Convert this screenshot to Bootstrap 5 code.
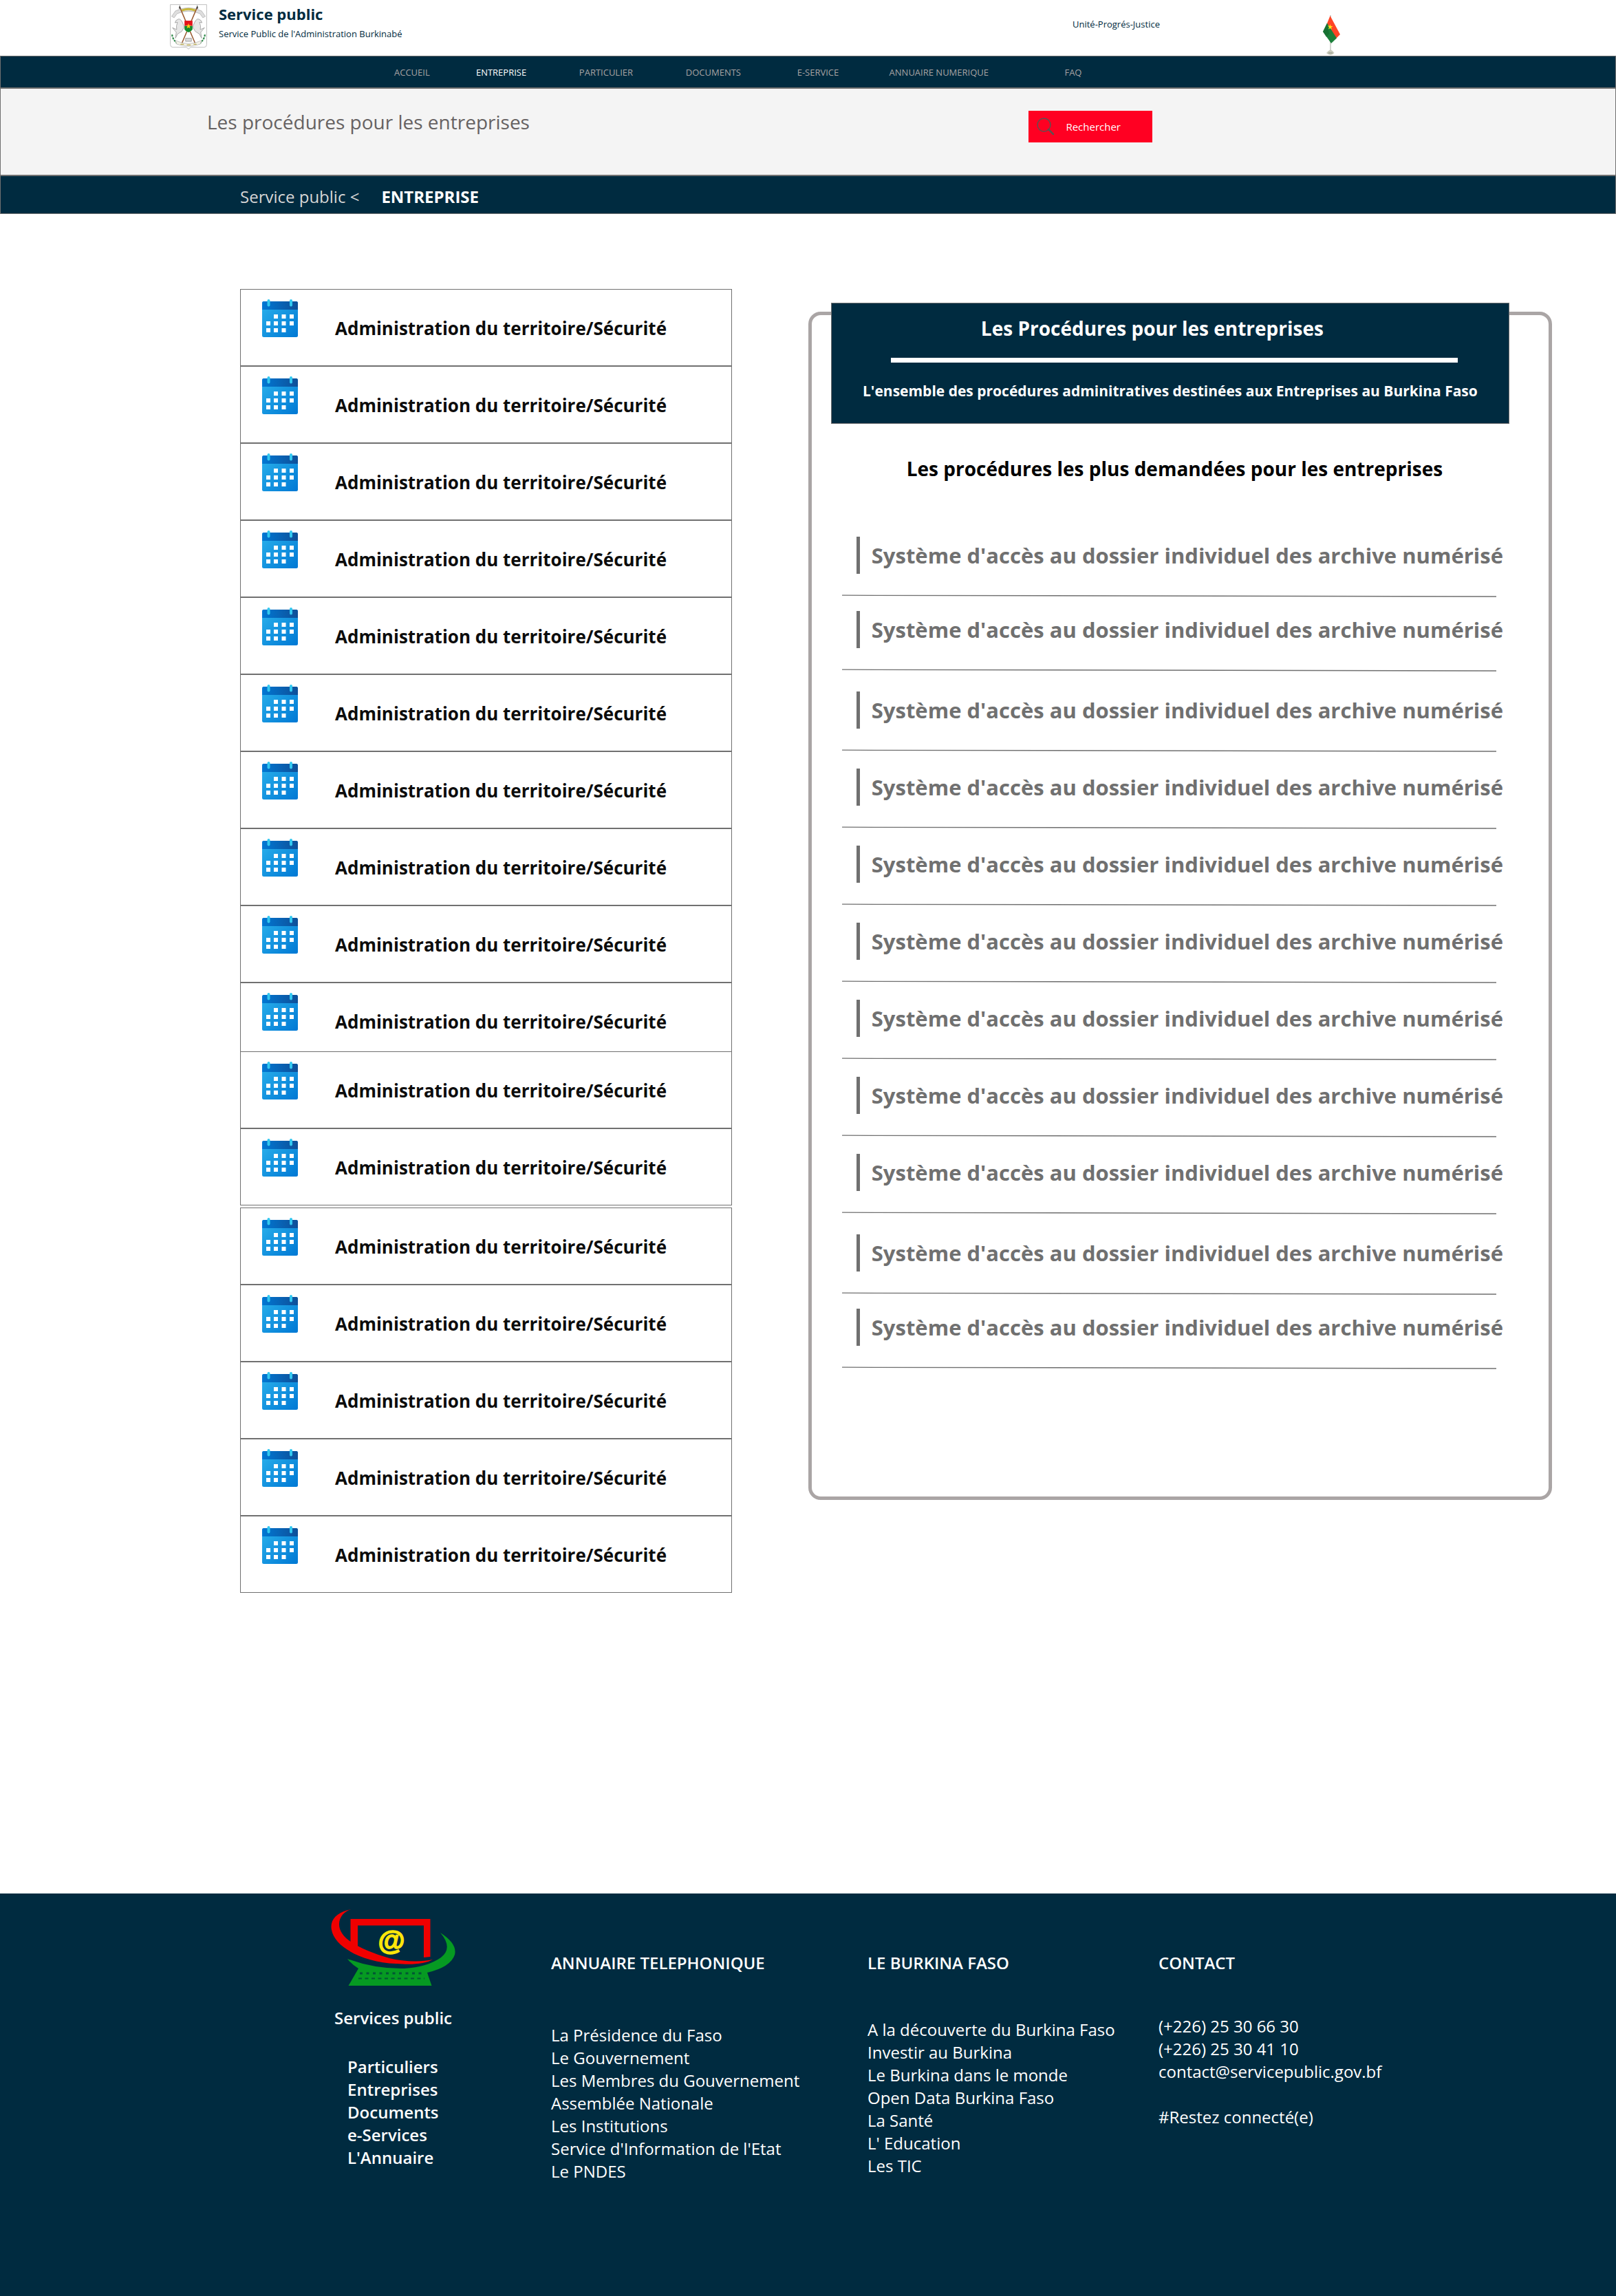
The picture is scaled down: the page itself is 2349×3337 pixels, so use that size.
<!DOCTYPE html>
<html lang="fr">
<head>
<meta charset="utf-8">
<meta name="viewport" content="width=device-width, initial-scale=1">
<title>Service public - Les procédures pour les entreprises</title>
<link href="https://cdn.jsdelivr.net/npm/bootstrap@5.3.0/dist/css/bootstrap.min.css" rel="stylesheet">
<style>
  :root { --navy: #002b40; --line: #707070; }
  body { font-family: "Open Sans", "Noto Sans", sans-serif; color: #000; background: #fff; }
  a { color: inherit; text-decoration: none; }
  a:hover { text-decoration: underline; }

  .top-band { display: grid; grid-template-columns: 1312fr 364fr 426fr; height: 81px; padding-left: 247px; color: var(--navy); font-size: 13px; line-height: 20px; }
  .brand-emblem { width: 54px; height: 66px; margin: 6px 17px 0 0; }
  .brand-title { font-size: 22px; line-height: 30px; margin: 5px 0 4px; }
  .motto { padding-top: 25px; }
  .flag-icon { width: 25px; height: 58px; margin-top: 22px; }

  .main-menu { display: grid; grid-template-columns: 119fr 150fr 155fr 162fr 134fr 255fr 801fr; align-items: center; height: 47px; padding: 0 0 0 572px; margin: 0; background: var(--navy); border: 1px solid var(--line); color: #a8a3a3; font-size: 13px; line-height: 20px; list-style: none; white-space: nowrap; }
  .main-menu .current { color: #fff; }

  .hero-band { display: grid; grid-template-columns: 1195fr 853fr; min-height: 127px; padding-left: 300px; background: #f4f4f4; border: 1px solid var(--line); }
  .hero-title { font-size: 28px; line-height: 40px; font-weight: 400; color: #666262; margin: 28px 0 0; }
  .btn-search { width: 180px; height: 46px; margin-top: 32px; padding: 0 0 0 12px; border: 0; border-radius: 0; background: #ff0022; color: #fff; font-size: 15px; gap: 16px; }
  .btn-search:hover { background: #d9001d; color: #fff; }

  .crumb-band { min-height: 56px; padding: 10px 0 4px 348px; background: var(--navy); border: 1px solid var(--line); color: #d6d6d6; font-size: 24px; line-height: 40px; gap: 32px; }

  .content-area { display: grid; grid-template-columns: 715fr 1081fr; column-gap: 111px; align-items: start; padding: 109px 93px 437px 349px; }

  .theme-item { height: 112px; padding-left: 31px; border: 1px solid var(--line); color: #0c0c0c; }
  .theme-item.joined { height: 100px; border-bottom: 0; }
  .theme-item.apart { margin-top: 3px; }
  .theme-item svg { width: 52px; height: 55px; margin: 14px 54px 0 0; }
  .theme-item a { font-size: 26px; line-height: 40px; font-weight: 700; margin-top: 36px; white-space: nowrap; }

  .proc-panel { margin-top: 33px; padding-bottom: 185px; border: 5px solid #aaa5a5; border-radius: 18px; }
  .proc-head { margin: -18px 57px 0 28px; padding: 16px 0 31px; background: var(--navy); border: 1px solid var(--line); color: #fff; text-align: center; }
  .proc-head h2 { font-size: 28px; line-height: 40px; font-weight: 700; margin: 0 52px 0 0; }
  .proc-head hr { height: 7px; margin: 23px 74px 25px 86px; border: 0; background: #fff; opacity: 1; }
  .proc-head p { font-size: 21px; line-height: 32px; font-weight: 700; margin: 0; white-space: nowrap; }
  .proc-sub { font-size: 28px; line-height: 40px; font-weight: 700; text-align: center; margin: 45px 16px 79px 0; }
  .proc-list { margin: 0 66px 0 44px; padding: 0; list-style: none; color: var(--line); }
  .proc-list li + li { margin-top: 24px; }
  .proc-list li.near { margin-top: 20px; }
  .proc-list li.far { margin-top: 29px; }
  .proc-list a { display: flex; align-items: center; height: 54px; margin: 0 0 30px 21px; padding-left: 17px; border-left: 5px solid var(--line); font-size: 31px; font-weight: 700; white-space: nowrap; }
  .proc-list svg { display: block; width: calc(100% - 10px); height: 4px; }

  .site-footer { display: grid; grid-template-columns: 320fr 460fr 423fr 665fr; min-height: 585px; padding-left: 481px; background: var(--navy); color: #fff; font-size: 24px; line-height: 33px; white-space: nowrap; }
  .site-footer h3 { font-size: 24px; line-height: 33px; font-weight: 600; margin: 84px 0 0; }
  .site-footer ul { list-style: none; padding: 0; margin: 72px 0 0; }
  .site-footer .gap-country { margin-top: 64px; }
  .site-footer .gap-contact { margin-top: 59px; }
  .foot-logo { display: block; width: 181px; height: 112px; margin-top: 23px; }
  .site-footer .foot-brand { margin: 29px 0 0 5px; }
  .site-footer .foot-menu { margin: 38px 0 0 24px; font-weight: 600; }
</style>
</head>
<body>

<svg width="0" height="0" class="d-none" aria-hidden="true">
  <symbol id="slant" viewBox="0 0 100 4" preserveAspectRatio="none"><path d="M0 1.2L100 3" stroke="#707070" stroke-width="1.3" fill="none"/></symbol>
</svg>

<header>
  <div class="top-band">
    <div class="d-flex">
      <svg class="brand-emblem" viewBox="0 0 176 200" preserveAspectRatio="none" role="img" aria-label="Armoiries du Burkina Faso">
        <path d="M2 2H174V178Q174 190 162 190H98L88 198L78 190H14Q2 190 2 178Z" fill="#fff" stroke="#bcbcbc" stroke-width="3"/>
        <path d="M8 54L26 30Q88 2 150 30L168 54L156 60L142 42Q88 20 34 42L20 60Z" fill="#dedede" stroke="#a5a5a5" stroke-width="2"/>
        <path d="M56 28Q88 16 120 28" fill="none" stroke="#c9b93c" stroke-width="9"/>
        <path d="M46 12L122 178M130 12L54 178" stroke="#9a5b32" stroke-width="5"/>
        <path d="M46 4L42 20L52 20ZM130 4L124 20L134 20Z" fill="#444"/>
        <path d="M66 96Q54 62 40 66Q26 70 24 82L36 80Q28 96 32 112L12 104L30 124L26 150L36 132L56 120L66 104Z" fill="#e6e6e6" stroke="#999" stroke-width="2.5"/>
        <path d="M110 96Q122 62 136 66Q150 70 152 82L140 80Q148 96 144 112L164 104L146 124L150 150L140 132L120 120L110 104Z" fill="#e6e6e6" stroke="#999" stroke-width="2.5"/>
        <path d="M69 73H107V96H69Z" fill="#e3121a"/>
        <path d="M69 96H107V110Q103 120 88 124Q73 120 69 110Z" fill="#128a2c"/>
        <path d="M88 84L91 93L100 93L93 98L96 107L88 102L80 107L83 98L76 93L85 93Z" fill="#fcd116"/>
        <path d="M74 150H102V164H74Z" fill="#d8d8d8" stroke="#888" stroke-width="2"/>
        <path d="M10 134Q14 160 40 176M166 134Q162 160 136 176" fill="none" stroke="#2f8a4a" stroke-width="7" stroke-dasharray="9 4"/>
        <path d="M26 160Q88 188 150 160L144 176Q88 196 32 176Z" fill="#f3f1e6" stroke="#aaa" stroke-width="2"/>
        <path d="M50 177H66M80 180H98M112 177H126" stroke="#b7a94c" stroke-width="4"/>
      </svg>
      <div>
        <h1 class="brand-title fw-bold">Service public</h1>
        <div>Service Public de l'Administration Burkinabé</div>
      </div>
    </div>
    <div class="motto">Unité-Progrés-Justice</div>
    <svg class="flag-icon" viewBox="0 0 25 58" role="img" aria-label="Drapeau du Burkina Faso">
      <path d="M11 0V54" stroke="#a9a9a0" stroke-width="1"/>
      <path d="M10.500 1L25 28L19 34L6 12Z" fill="#ff4526"/>
      <path d="M6 11.500L20 33.500L12 41L0 24Z" fill="#1b7f3a"/>
      <path d="M6 12L9 27L5 32L0 24Z" fill="#14652d" opacity=".6"/>
      <path d="M10.500 13L11.500 16L14.500 16L12 18L13 21L10.500 19L8 20.500L9 17.500L7 15.500L10 15.500Z" fill="#ffe21a"/>
      <path d="M11 50L14 52L16.500 55Q14 58 11 58Q8 58 5 55L8 52Z" fill="#c9cbbd"/>
      <path d="M8 55H14" stroke="#8b8d80"/>
    </svg>
  </div>
  <nav aria-label="Menu principal">
    <ul class="main-menu">
      <li><a href="#">ACCUEIL</a></li>
      <li><a href="#" class="current" aria-current="page">ENTREPRISE</a></li>
      <li><a href="#">PARTICULIER</a></li>
      <li><a href="#">DOCUMENTS</a></li>
      <li><a href="#">E-SERVICE</a></li>
      <li><a href="#">ANNUAIRE NUMERIQUE</a></li>
      <li><a href="#">FAQ</a></li>
    </ul>
  </nav>
</header>

<div class="hero-band">
  <p class="hero-title">Les procédures pour les entreprises</p>
  <button type="button" class="btn btn-search d-flex align-items-center">
    <svg width="26" height="26" viewBox="0 0 26 26" aria-hidden="true"><circle cx="10.500" cy="10.500" r="9.500" fill="none" stroke="#5f5050" stroke-width="1.500"/><path d="M17 17L24 24" stroke="#5f5050" stroke-width="2.500" stroke-linecap="round"/></svg>
    Rechercher
  </button>
</div>
<nav class="crumb-band d-flex" aria-label="Fil d'Ariane">
  <span><a href="#">Service public</a> &lt;</span>
  <strong class="text-white">ENTREPRISE</strong>
</nav>

<main class="content-area">
  <svg width="0" height="0" class="position-absolute" aria-hidden="true">
    <defs>
      <linearGradient id="calBody" x1="0" y1="0" x2="1" y2="1"><stop offset="0" stop-color="#2bb2ec"/><stop offset="1" stop-color="#0078d4"/></linearGradient>
      <linearGradient id="calTop"><stop offset="0" stop-color="#0078d4"/><stop offset="1" stop-color="#0f4f98"/></linearGradient>
      <symbol id="cal" viewBox="0 0 52 55">
        <rect x="0" y="3" width="52" height="52" rx="2.500" fill="url(#calBody)"/>
        <path d="M0 15V5.500Q0 3 2.500 3H49.500Q52 3 52 5.500V15Z" fill="url(#calTop)"/>
        <rect x="7.500" y="0" width="4" height="10.500" rx="2" fill="#32c8f0"/>
        <rect x="40" y="0" width="4" height="10.500" rx="2" fill="#32c8f0"/>
        <path fill="#fff" d="M17 22h6v6h-6zM28.500 22h6v6h-6zM40 22h6v6h-6zM6 32h6v6h-6zM17 32h6v6h-6zM28.500 32h6v6h-6zM40 32h6v6h-6zM6 42h6v6h-6zM17 42h6v6h-6zM28.500 42h6v6h-6z"/>
      </symbol>
    </defs>
  </svg>

  <ul class="list-unstyled mb-0">
    <li class="theme-item d-flex align-items-start"><svg aria-hidden="true"><use href="#cal"/></svg><a href="#">Administration du territoire/Sécurité</a></li>
    <li class="theme-item d-flex align-items-start"><svg aria-hidden="true"><use href="#cal"/></svg><a href="#">Administration du territoire/Sécurité</a></li>
    <li class="theme-item d-flex align-items-start"><svg aria-hidden="true"><use href="#cal"/></svg><a href="#">Administration du territoire/Sécurité</a></li>
    <li class="theme-item d-flex align-items-start"><svg aria-hidden="true"><use href="#cal"/></svg><a href="#">Administration du territoire/Sécurité</a></li>
    <li class="theme-item d-flex align-items-start"><svg aria-hidden="true"><use href="#cal"/></svg><a href="#">Administration du territoire/Sécurité</a></li>
    <li class="theme-item d-flex align-items-start"><svg aria-hidden="true"><use href="#cal"/></svg><a href="#">Administration du territoire/Sécurité</a></li>
    <li class="theme-item d-flex align-items-start"><svg aria-hidden="true"><use href="#cal"/></svg><a href="#">Administration du territoire/Sécurité</a></li>
    <li class="theme-item d-flex align-items-start"><svg aria-hidden="true"><use href="#cal"/></svg><a href="#">Administration du territoire/Sécurité</a></li>
    <li class="theme-item d-flex align-items-start"><svg aria-hidden="true"><use href="#cal"/></svg><a href="#">Administration du territoire/Sécurité</a></li>
    <li class="theme-item joined d-flex align-items-start"><svg aria-hidden="true"><use href="#cal"/></svg><a href="#">Administration du territoire/Sécurité</a></li>
    <li class="theme-item d-flex align-items-start"><svg aria-hidden="true"><use href="#cal"/></svg><a href="#">Administration du territoire/Sécurité</a></li>
    <li class="theme-item d-flex align-items-start"><svg aria-hidden="true"><use href="#cal"/></svg><a href="#">Administration du territoire/Sécurité</a></li>
    <li class="theme-item apart d-flex align-items-start"><svg aria-hidden="true"><use href="#cal"/></svg><a href="#">Administration du territoire/Sécurité</a></li>
    <li class="theme-item d-flex align-items-start"><svg aria-hidden="true"><use href="#cal"/></svg><a href="#">Administration du territoire/Sécurité</a></li>
    <li class="theme-item d-flex align-items-start"><svg aria-hidden="true"><use href="#cal"/></svg><a href="#">Administration du territoire/Sécurité</a></li>
    <li class="theme-item d-flex align-items-start"><svg aria-hidden="true"><use href="#cal"/></svg><a href="#">Administration du territoire/Sécurité</a></li>
    <li class="theme-item d-flex align-items-start"><svg aria-hidden="true"><use href="#cal"/></svg><a href="#">Administration du territoire/Sécurité</a></li>
  </ul>

  <section class="proc-panel">
    <div class="proc-head">
      <h2>Les Procédures pour les entreprises</h2>
      <hr>
      <p>L'ensemble des procédures adminitratives destinées aux Entreprises au Burkina Faso</p>
    </div>
    <h3 class="proc-sub">Les procédures les plus demandées pour les entreprises</h3>
    <ul class="proc-list">
      <li><a href="#">Système d'accès au dossier individuel des archive numérisé</a><svg aria-hidden="true"><use href="#slant"/></svg></li>
      <li class="near"><a href="#">Système d'accès au dossier individuel des archive numérisé</a><svg aria-hidden="true"><use href="#slant"/></svg></li>
      <li class="far"><a href="#">Système d'accès au dossier individuel des archive numérisé</a><svg aria-hidden="true"><use href="#slant"/></svg></li>
      <li><a href="#">Système d'accès au dossier individuel des archive numérisé</a><svg aria-hidden="true"><use href="#slant"/></svg></li>
      <li><a href="#">Système d'accès au dossier individuel des archive numérisé</a><svg aria-hidden="true"><use href="#slant"/></svg></li>
      <li><a href="#">Système d'accès au dossier individuel des archive numérisé</a><svg aria-hidden="true"><use href="#slant"/></svg></li>
      <li><a href="#">Système d'accès au dossier individuel des archive numérisé</a><svg aria-hidden="true"><use href="#slant"/></svg></li>
      <li><a href="#">Système d'accès au dossier individuel des archive numérisé</a><svg aria-hidden="true"><use href="#slant"/></svg></li>
      <li><a href="#">Système d'accès au dossier individuel des archive numérisé</a><svg aria-hidden="true"><use href="#slant"/></svg></li>
      <li class="far"><a href="#">Système d'accès au dossier individuel des archive numérisé</a><svg aria-hidden="true"><use href="#slant"/></svg></li>
      <li class="near"><a href="#">Système d'accès au dossier individuel des archive numérisé</a><svg aria-hidden="true"><use href="#slant"/></svg></li>
    </ul>
  </section>
</main>

<footer class="site-footer">
  <div>
    <svg class="foot-logo" viewBox="0 0 181 112" role="img" aria-label="Services public">
      <path d="M24 72Q64 87 107 86Q140 84 160 70Q178 56 159 34Q184 50 180 66Q174 84 140 92L146.500 111H25.500L40 86Q30 80 24 72Z" fill="#069a22"/>
      <path d="M28.500 14H144.500V69L135 70V23.500H39V56L28.500 48Z" fill="#f00000"/>
      <path d="M29 0C8 4 -2 16 1 30C5 54 45 77 95 79C120 81 138 79 148 73C130 77 105 76 85 71C50 61 12 45 12 22C12 12 18 4 29 0Z" fill="#f00000"/>
      <path d="M42 93H132" stroke="#002b40" stroke-width="3" stroke-dasharray="4 5.500" opacity=".6"/>
      <path d="M40 100.500H136" stroke="#002b40" stroke-width="2" stroke-dasharray="5 4.500" opacity=".6"/>
      <text x="88" y="59" text-anchor="middle" font-family="Liberation Sans, sans-serif" font-weight="700" font-size="40" fill="#ffe60a" stroke="#ffe60a" stroke-width="1.500">@</text>
    </svg>
    <h3 class="foot-brand">Services public</h3>
    <ul class="foot-menu">
      <li><a href="#">Particuliers</a></li>
      <li><a href="#">Entreprises</a></li>
      <li><a href="#">Documents</a></li>
      <li><a href="#">e-Services</a></li>
      <li><a href="#">L'Annuaire</a></li>
    </ul>
  </div>
  <div>
    <h3>ANNUAIRE TELEPHONIQUE</h3>
    <ul>
      <li><a href="#">La Présidence du Faso</a></li>
      <li><a href="#">Le Gouvernement</a></li>
      <li><a href="#">Les Membres du Gouvernement</a></li>
      <li><a href="#">Assemblée Nationale</a></li>
      <li><a href="#">Les Institutions</a></li>
      <li><a href="#">Service d'Information de l'Etat</a></li>
      <li><a href="#">Le PNDES</a></li>
    </ul>
  </div>
  <div>
    <h3>LE BURKINA FASO</h3>
    <ul class="gap-country">
      <li><a href="#">A la découverte du Burkina Faso</a></li>
      <li><a href="#">Investir au Burkina</a></li>
      <li><a href="#">Le Burkina dans le monde</a></li>
      <li><a href="#">Open Data Burkina Faso</a></li>
      <li><a href="#">La Santé</a></li>
      <li><a href="#">L' Education</a></li>
      <li><a href="#">Les TIC</a></li>
    </ul>
  </div>
  <div>
    <h3>CONTACT</h3>
    <ul class="gap-contact">
      <li>(+226) 25 30 66 30</li>
      <li>(+226) 25 30 41 10</li>
      <li><a href="mailto:contact@servicepublic.gov.bf">contact@servicepublic.gov.bf</a></li>
      <li><br></li>
      <li>#Restez connecté(e)</li>
    </ul>
  </div>
</footer>

<script src="https://cdn.jsdelivr.net/npm/bootstrap@5.3.0/dist/js/bootstrap.bundle.min.js"></script>
</body>
</html>
